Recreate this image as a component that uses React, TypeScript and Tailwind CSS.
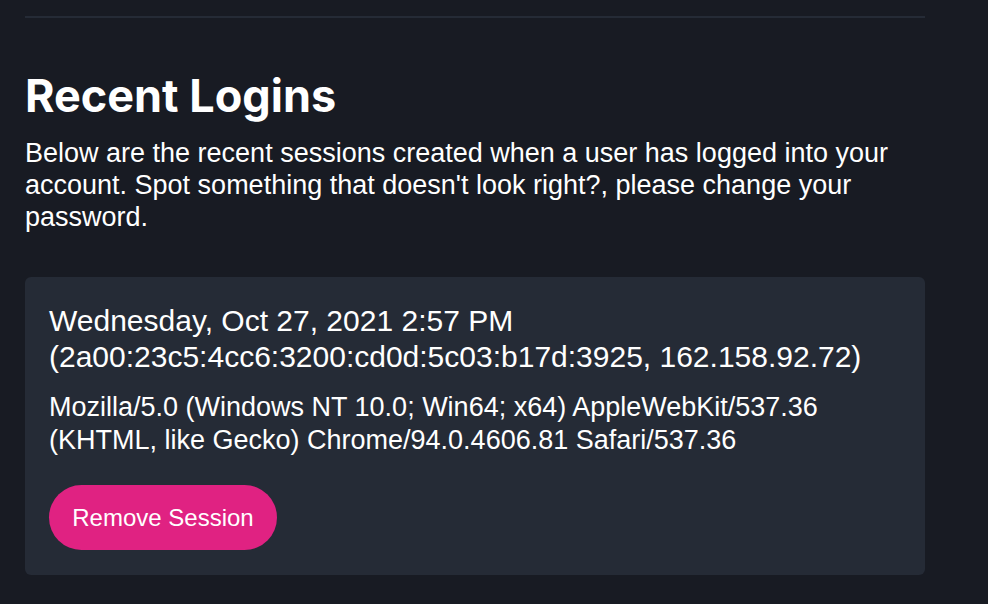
export default function App() {
  return (
    <div className="min-h-[604px] w-full bg-[#181b23] px-[25px] pt-4 pb-7 font-['Liberation_Sans',Arial,sans-serif] text-white">
      <div className="w-[900px]">
        <div className="h-[2px] bg-[#252b36]" />

        <h2 className="mt-[51px] font-['Inter',sans-serif] text-[45px] leading-[54px] font-bold">
          Recent Logins
        </h2>
        <p className="mt-[14px] text-[27px] leading-[32px]">
          Below are the recent sessions created when a user has logged into your account. Spot something that doesn't
          look right?, please change your password.
        </p>

        <div className="mt-[44px] rounded-md bg-[#252b36] px-6 pt-[26px] pb-[25px]">
          <div className="text-[30px] leading-[36px]">
            Wednesday, Oct 27, 2021 2:57 PM (2a00:23c5:4cc6:3200:cd0d:5c03:b17d:3925, 162.158.92.72)
          </div>
          <div className="mt-[16px] text-[27px] leading-[33px]">
            Mozilla/5.0 (Windows NT 10.0; Win64; x64) AppleWebKit/537.36 (KHTML, like Gecko) Chrome/94.0.4606.81
            Safari/537.36
          </div>
          <button
            type="button"
            className="mt-[28px] h-[65px] w-[228px] rounded-full bg-[#e02282] text-[24px] text-white"
          >
            Remove Session
          </button>
        </div>
      </div>
    </div>
  );
}
